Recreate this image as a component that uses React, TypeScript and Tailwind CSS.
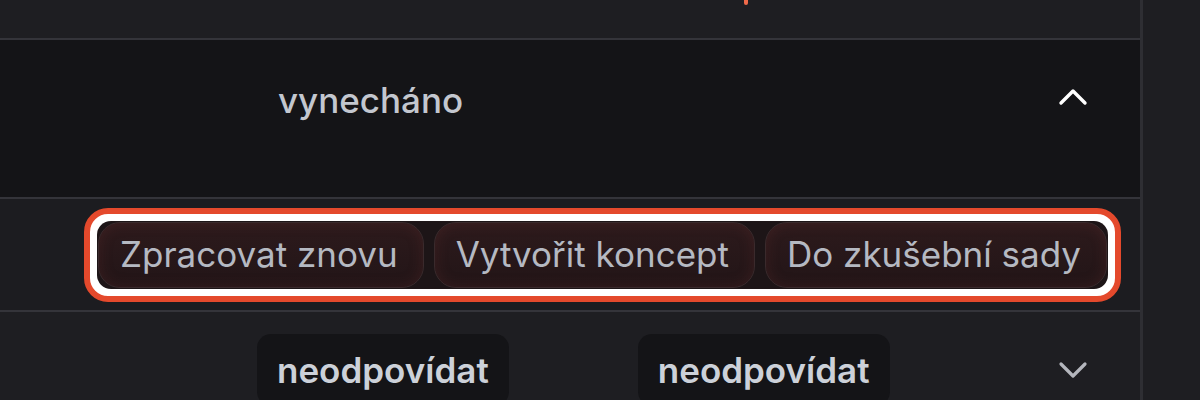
import { ChevronDown, ChevronUp } from "lucide-react";

const actions = ["Zpracovat znovu", "Vytvořit koncept", "Do zkušební sady"];

export default function App() {
  return (
    <div
      className="flex h-[400px] w-[1200px] overflow-hidden bg-[#1e1e22]"
      style={{ fontFamily: "Inter, 'Noto Sans', sans-serif" }}
    >
      <div className="flex w-[1143px] flex-col border-r-[3px] border-[#2e2e33]">
        {/* top band, cut off */}
        <div className="relative h-[38px] shrink-0 bg-[#1e1e22]">
          <span className="absolute left-[744px] top-0 h-[5px] w-[4px] rounded-b-sm bg-[#f06a4a]" />
        </div>

        <div className="flex h-[161px] shrink-0 items-start border-y-[2px] border-[#34343a] bg-[#141417] pr-[43px] pt-[34px]">
          <span className="ml-[278px] text-[35px] leading-[52px] font-medium text-[#c3c7cf]">vynecháno</span>
          <ChevronUp className="ml-auto mt-[-1px] h-[48px] w-[48px] text-white" strokeWidth={1.7} />
        </div>

        <div className="flex h-[113px] shrink-0 items-center justify-end border-b-[2px] border-[#34343a] bg-[#1c1c20] pr-[19px]">
          <div className="rounded-[24px] border-[6px] border-[#e4492c] bg-white p-[7px]">
            <div className="flex gap-[10px] rounded-[14px] bg-[#1d1517] p-[1px]">
              {actions.map((label) => (
                <button
                  key={label}
                  type="button"
                  className="h-[66px] rounded-[22px] border border-[#3a2a2c] bg-gradient-to-b from-[#2d1a1c] to-[#221517] pl-[21px] pr-[25px] text-[35px] text-[#b5b9c2] shadow-[inset_0_0_14px_rgba(120,50,50,0.25)]"
                >
                  {label}
                </button>
              ))}
            </div>
          </div>
        </div>

        <div className="flex flex-1 items-start bg-[#1e1e22] pr-[43px] pt-[22px]">
          <span className="ml-[257px] rounded-[14px] bg-[#141417] px-[20px] py-[10px] text-[35px] leading-[52px] font-semibold text-[#ccd1d9]">
            neodpovídat
          </span>
          <span className="ml-[129px] rounded-[14px] bg-[#141417] px-[20px] py-[10px] text-[35px] leading-[52px] font-semibold text-[#ccd1d9]">
            neodpovídat
          </span>
          <ChevronDown className="ml-auto mt-[12px] h-[48px] w-[48px] text-[#b4b6bd]" strokeWidth={1.6} />
        </div>
      </div>
      <div className="flex-1 bg-[#1e1e22]" />
    </div>
  );
}
